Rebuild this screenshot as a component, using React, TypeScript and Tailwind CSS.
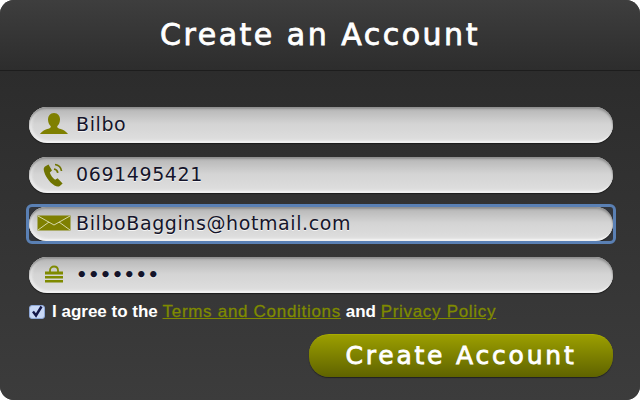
import React from 'react';

const PersonIcon = () => (
  <svg width="30" height="24" viewBox="0 0 30 24" className="block">
    <path fill="#7f8000" d="M15 1c4 0 6 3 6 6.500 0 2.500-1 5-2.600 6.500-.5.800 0 1.800 1 2.200 3 1 7 2 9.600 5.800H1c2.600-3.800 6.600-4.800 9.600-5.800 1-.4 1.500-1.400 1-2.200C10 12.500 9 10 9 7.500 9 4 11 1 15 1z" />
  </svg>
);

const PhoneIcon = () => (
  <svg width="24" height="28" viewBox="0 0 24 28" className="block">
    <path fill="#6f7400" d="M3 6.500 6.500 4.500 10 10.500 7.800 12.400c.8 2.800 2.800 5.600 5.300 7.300l2.500-1.500 5 5.300-2.800 2.500c-1.400 1-3.500.6-5.300-.6C7 22 2.800 15.500 1.800 10.200 1.500 8.700 2 7.300 3 6.500z" />
    <path fill="none" stroke="#6f7400" strokeWidth="1.700" d="M12 9c2 .3 3.500 1.700 3.800 3.800M13 4.500c3.500.5 6 3 6.500 6.500" />
  </svg>
);

const MailIcon = () => (
  <svg width="34" height="16" viewBox="0 0 34 16" className="block">
    <rect width="33" height="15" x="0.500" y="0.500" fill="#7f8000" />
    <path fill="none" stroke="#d6d8a8" strokeWidth="1" d="M1 1l16 9 16-9M1 15l11-8M33 15 22 7" />
  </svg>
);

const LockIcon = () => (
  <svg width="20" height="18" viewBox="0 0 20 18" className="block">
    <path fill="none" stroke="#7f8a00" strokeWidth="1.800" d="M6 7V5.500C6 3 7.800 1.500 10 1.500s4 1.500 4 4V7" />
    <rect x="1" y="6.500" width="18" height="3" fill="#7f8a00" />
    <rect x="1" y="11" width="18" height="2.500" fill="#7f8a00" />
    <rect x="1" y="15" width="18" height="2.500" fill="#7f8a00" />
  </svg>
);

const fields = [
  { icon: <PersonIcon />, value: 'Bilbo', focused: false, secret: false },
  { icon: <PhoneIcon />, value: '0691495421', focused: false, secret: false },
  { icon: <MailIcon />, value: 'BilboBaggins@hotmail.com', focused: true, secret: false },
  { icon: <LockIcon />, value: '•••••••', focused: false, secret: true },
];

const Pill = ({ field }: { field: (typeof fields)[number] }) => (
  <div className="h-full flex items-center rounded-[18px] bg-gradient-to-b from-[#b4b4b4] via-[#d4d4d4] to-[#dedede] border-b-2 border-b-[#f0f0f0] shadow-[0_1px_1px_#1c1c1c,inset_0_2px_2px_#8e8e8e,inset_2px_0_3px_#f2f2f2]">
    <div className="w-[47px] shrink-0 flex justify-center pl-[2px]">{field.icon}</div>
    <span
      className={`text-[#14142a] [text-shadow:0_1px_0_#f4f4f4] ${
        field.secret ? 'text-[18px] tracking-[0.4px] font-bold' : 'text-[19px] tracking-[0.6px]'
      }`}
    >
      {field.value}
    </span>
  </div>
);

export default function App() {
  return (
    <div className="w-[640px] h-[400px] bg-white overflow-hidden font-['DejaVu_Sans',sans-serif]">
      <div className="w-full h-full rounded-[14px] overflow-hidden flex flex-col bg-[#3a3a3a]">
        {/* Header */}
        <div className="h-[71px] shrink-0 flex items-center justify-center border-b border-[#1d1d1d] bg-gradient-to-b from-[#3e3e3e] to-[#2d2d2d]">
          <h1 className="text-[30px] tracking-[2.5px] font-normal text-white mt-[-2px] [-webkit-text-stroke:0.8px_#fff]">Create an Account</h1>
        </div>

        {/* Form */}
        <div className="flex-1 flex flex-col pl-[29px] pr-[27px] pt-[36px] bg-gradient-to-b from-[#2c2c2c] to-[#3c3c3c]">
          <div className="flex flex-col gap-[14px]">
            {fields.map((field) =>
              field.focused ? (
                <div key={field.value} className="h-[36px]">
                  <div className="h-[34px] rounded-[3px] bg-[#33363c] outline-[3px] outline-[#5a80b4]">
                    <Pill field={field} />
                  </div>
                </div>
              ) : (
                <div key={field.value} className="h-[36px]">
                  <Pill field={field} />
                </div>
              ),
            )}
          </div>

          {/* Terms */}
          <div className="flex items-center mt-[11px] h-[16px] font-['Liberation_Sans',sans-serif] text-[17px] font-bold">
            <span className="w-[16px] h-[14px] rounded-[3px] bg-[#c9d9f7] border border-[#8ea8d8] flex items-center justify-center mr-[7px] shrink-0">
              <svg width="14" height="14" viewBox="0 0 14 14" className="block">
                <path fill="none" stroke="#14184a" strokeWidth="2.400" d="M3 6.500l3 4 5.500-9" />
              </svg>
            </span>
            <span className="text-white whitespace-nowrap">I agree to the&nbsp;</span>
            <a className="text-[#7f8a00] font-normal underline tracking-[0.7px] whitespace-nowrap [-webkit-text-stroke:0.3px_#7f8a00]">Terms and Conditions</a>
            <span className="text-white whitespace-nowrap">&nbsp;and&nbsp;</span>
            <a className="text-[#7f8a00] font-normal underline tracking-[0.7px] whitespace-nowrap [-webkit-text-stroke:0.3px_#7f8a00]">Privacy Policy</a>
          </div>

          {/* Submit */}
          <div className="flex justify-end mt-[14px]">
            <button className="w-[304px] h-[43px] rounded-[20px] bg-gradient-to-b from-[#9c9f00] to-[#5f6300] border-t border-t-[#a8ac00] text-white text-[25px] tracking-[2.8px] font-normal shadow-[0_1px_1px_#222] [-webkit-text-stroke:0.8px_#fff]">
              Create Account
            </button>
          </div>
        </div>
      </div>
    </div>
  );
}
